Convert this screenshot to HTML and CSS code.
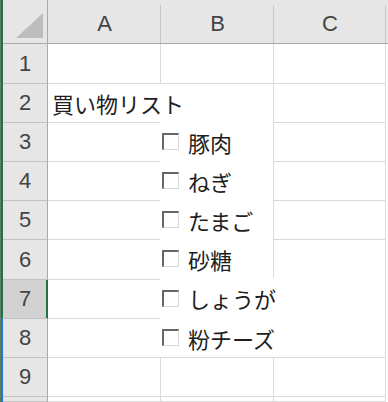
FILE: index.html
```html
<!DOCTYPE html>
<html lang="ja">
<head>
    <meta charset="UTF-8">
    <meta name="viewport" content="width=device-width, initial-scale=1.0">
    <title>買い物リスト</title>
    <link rel="stylesheet" href="styles.css">
</head>
<body>
    <div class="excel">
        <div class="edge"></div>
        <div class="sheet">
            <div class="corner">
                <svg width="44" height="43" viewBox="0 0 44 43"><polygon points="13,38 40,38 40,13" fill="#bdbdbd"/></svg>
            </div>
            <div class="col-head">A</div>
            <div class="col-head">B</div>
            <div class="col-head">C</div>
            <div class="col-head end"></div>

            <div class="row-head">1</div><div class="cell"></div><div class="cell"></div><div class="cell"></div><div class="pad"></div>
            <div class="row-head">2</div><div class="cell spill">買い物リスト</div><div class="cell"></div><div class="cell"></div><div class="pad"></div>
            <div class="row-head">3</div><div class="cell"></div><div class="cell"></div><div class="cell"></div><div class="pad"></div>
            <div class="row-head">4</div><div class="cell"></div><div class="cell"></div><div class="cell"></div><div class="pad"></div>
            <div class="row-head">5</div><div class="cell"></div><div class="cell"></div><div class="cell"></div><div class="pad"></div>
            <div class="row-head">6</div><div class="cell"></div><div class="cell"></div><div class="cell"></div><div class="pad"></div>
            <div class="row-head active">7</div><div class="cell"></div><div class="cell"></div><div class="cell"></div><div class="pad"></div>
            <div class="row-head">8</div><div class="cell"></div><div class="cell"></div><div class="cell"></div><div class="pad"></div>
            <div class="row-head">9</div><div class="cell"></div><div class="cell"></div><div class="cell"></div><div class="pad"></div>
            <div class="row-head"></div><div class="cell"></div><div class="cell"></div><div class="cell"></div><div class="pad"></div>
        </div>

        <!-- form-control checkboxes floating over column B -->
        <ul class="checklist">
            <li class="check"><span class="box"></span>豚肉</li>
            <li class="check"><span class="box"></span>ねぎ</li>
            <li class="check"><span class="box"></span>たまご</li>
            <li class="check"><span class="box"></span>砂糖</li>
            <li class="check wide tall"><span class="box"></span>しょうが</li>
            <li class="check wide"><span class="box"></span>粉チーズ</li>
        </ul>
    </div>
</body>
</html>
```

FILE: styles.css
```css
body {
    margin: 0;
    padding: 0;
    background: #ffffff;
    font-family: "Noto Sans CJK JP", sans-serif;
    color: #1e1e1e;
}

.excel {
    position: relative;
    display: flex;
    width: 388px;
    height: 402px;
    overflow: hidden;
}

.edge {
    width: 3px;
    flex-shrink: 0;
    background: linear-gradient(to bottom, #217346 0, #217346 318px, #1f78c8 318px);
    border-left: 1px solid #5d7d69;
    box-sizing: border-box;
}

.sheet {
    display: grid;
    grid-template-columns: 45px 113px 113px 112px 1fr;
    grid-template-rows: 44px 40px 39px 39px 39px 39px 40px 39px 39px 39px 1fr;
    flex: 1;
}

.sheet > div {
    box-sizing: border-box;
}

.corner {
    background: #e6e6e6;
    border-right: 1px solid #a9a9a9;
    border-bottom: 1px solid #a9a9a9;
}

.corner svg {
    display: block;
}

.col-head {
    display: flex;
    align-items: center;
    justify-content: center;
    padding-top: 5px;
    background: linear-gradient(#c6c6c6, #c6c6c6) right bottom / 1px 38px no-repeat, #e6e6e6;
    border-bottom: 1px solid #a9a9a9;
    font-family: "Liberation Sans", sans-serif;
    font-size: 22px;
    color: #444444;
}

.col-head.end {
    background: #e6e6e6;
}

.row-head {
    display: flex;
    align-items: center;
    justify-content: center;
    background: #e6e6e6;
    border-right: 1px solid #a9a9a9;
    border-bottom: 1px solid #c2c2c2;
    font-family: "Liberation Sans", sans-serif;
    font-size: 22px;
    color: #444444;
}

.row-head.active {
    background: #d2d2d2;
    border-right-color: #217346;
    box-shadow: inset -1px 0 0 #217346;
}

.cell {
    border-right: 1px solid #dadada;
    border-bottom: 1px solid #dadada;
}

.cell.spill {
    display: flex;
    align-items: center;
    padding-left: 4px;
    border-right-color: #ffffff;
    white-space: nowrap;
    font-size: 22px;
}

.pad {
    background: #ffffff;
}

.checklist {
    position: absolute;
    left: 160px;
    top: 122px;
    margin: 0;
    padding: 0;
    list-style: none;
}

.check {
    display: flex;
    align-items: center;
    gap: 9px;
    width: 113px;
    height: 39px;
    padding-left: 2px;
    box-sizing: border-box;
    background: #ffffff;
    font-size: 22px;
    white-space: nowrap;
}

.check.wide {
    width: 225px;
}

.check.tall {
    height: 40px;
}

.box {
    width: 17px;
    height: 17px;
    flex-shrink: 0;
    box-sizing: border-box;
    background: #ffffff;
    border-top: 2px solid #666666;
    border-left: 2px solid #666666;
    border-right: 1px solid #d6d6d6;
    border-bottom: 1px solid #d6d6d6;
}
```
